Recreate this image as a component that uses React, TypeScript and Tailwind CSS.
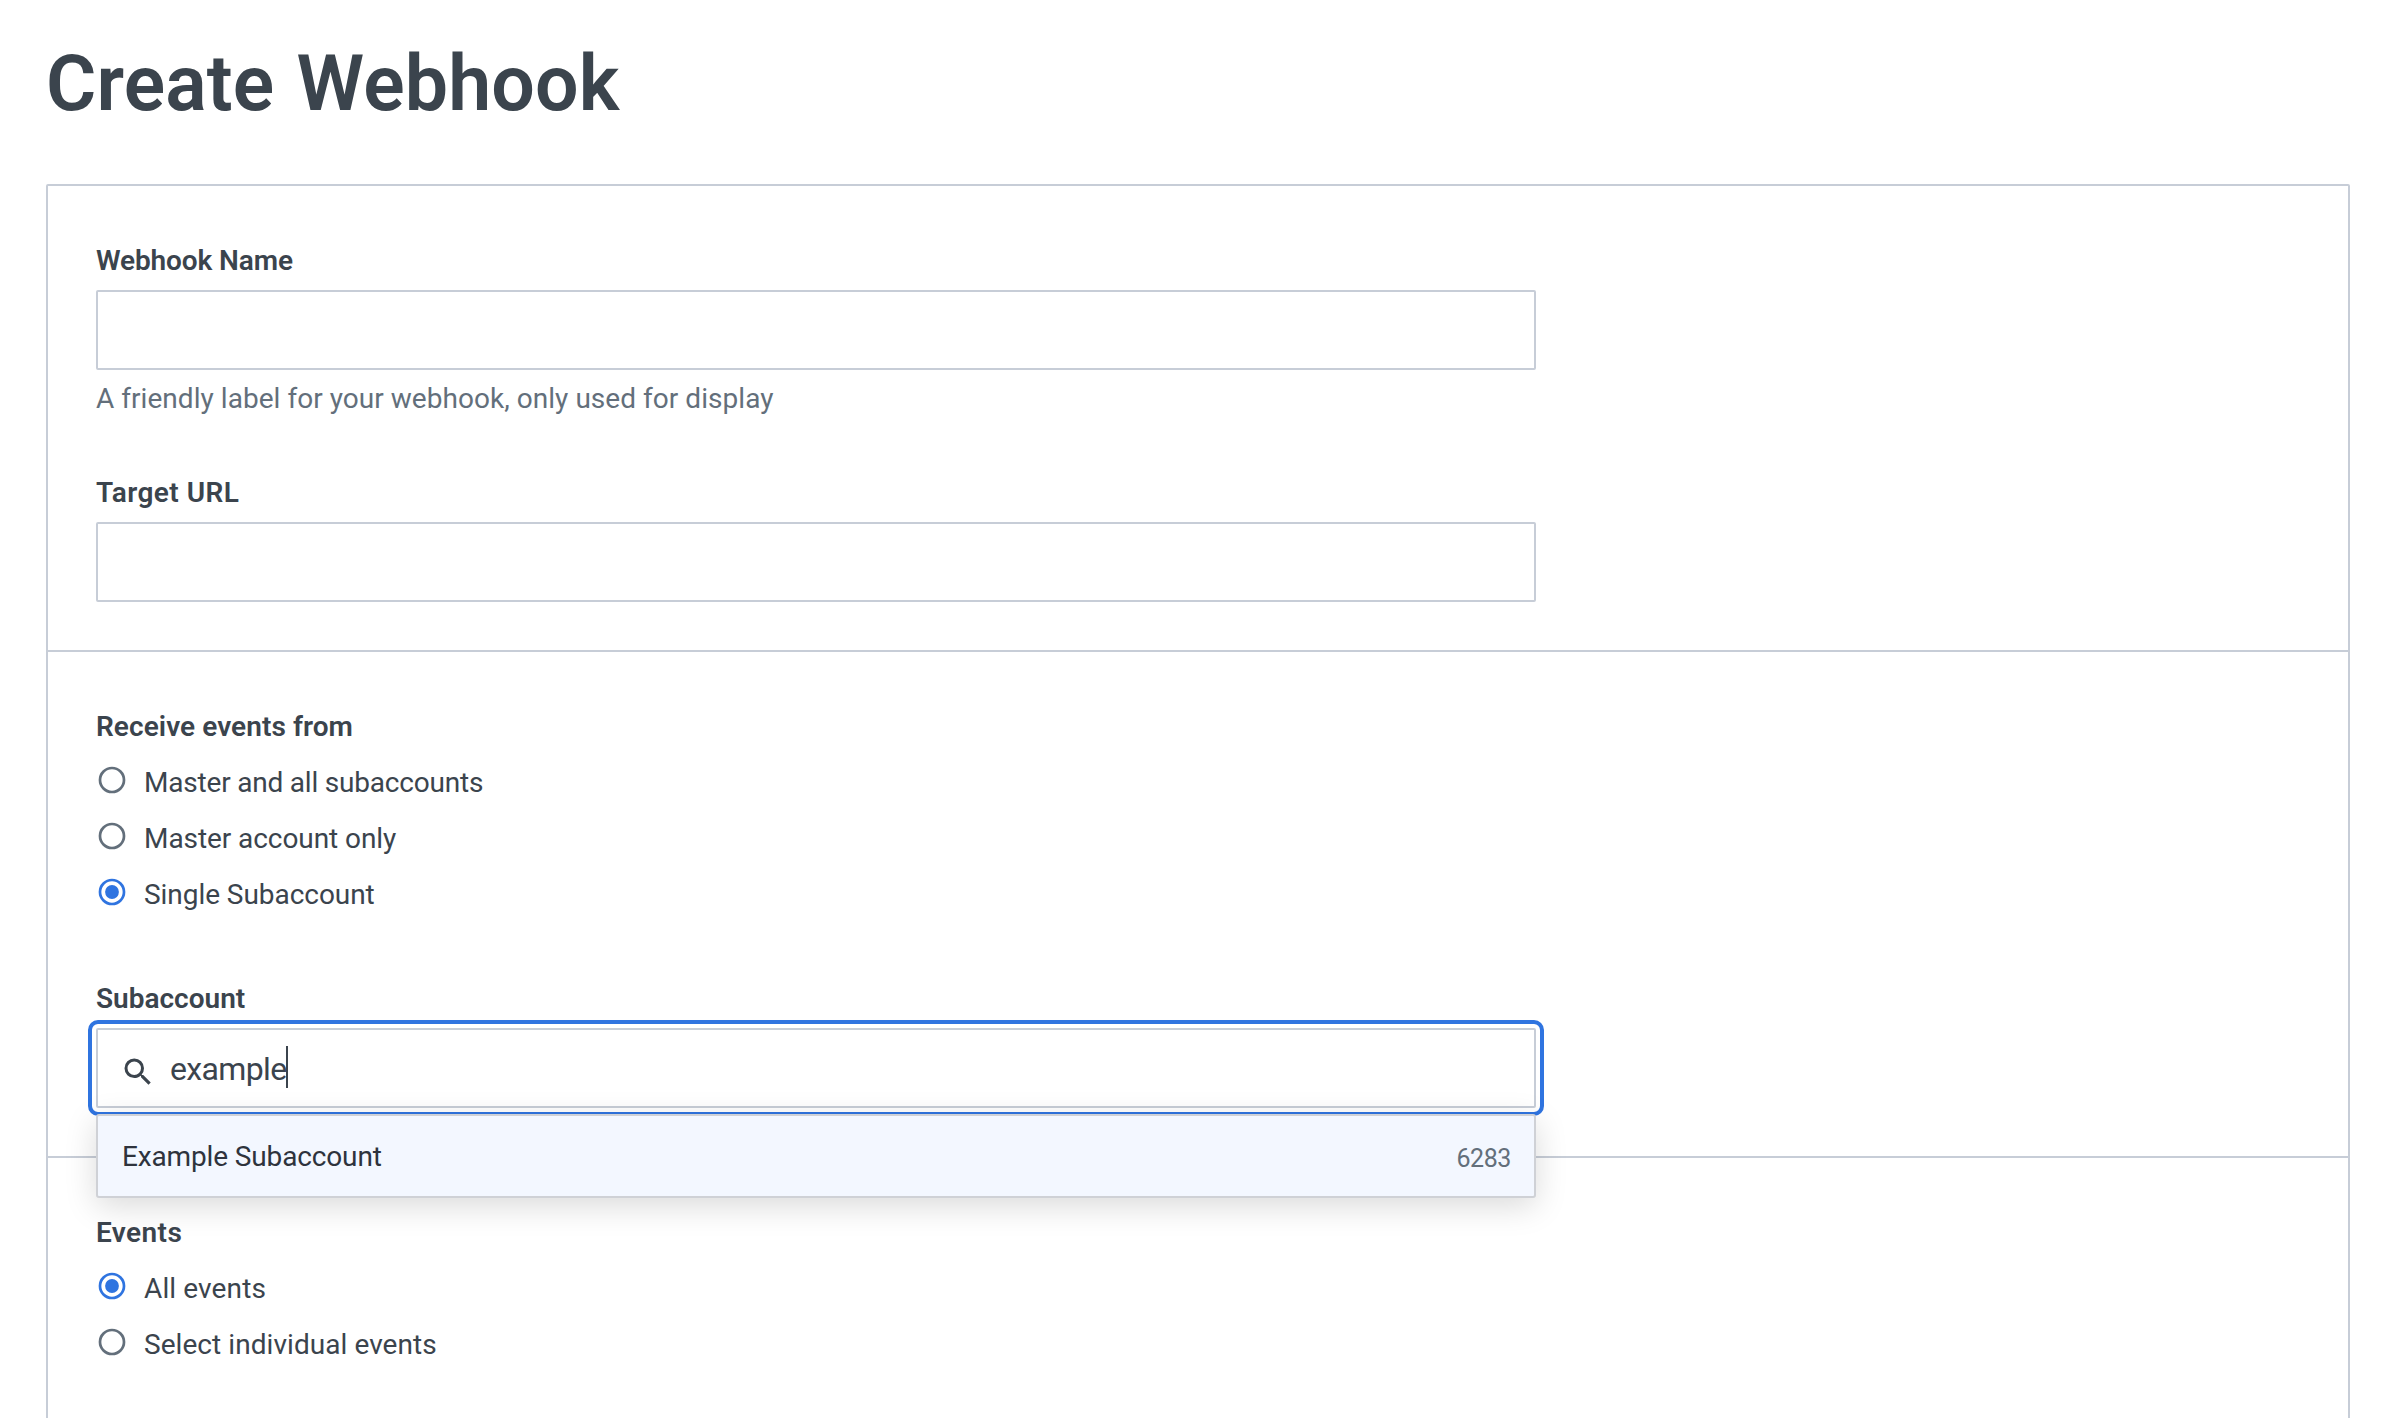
import type { ReactNode } from "react";

function Label({ children, className = "" }: { children: ReactNode; className?: string }) {
  return (
    <div className={`text-[28px] leading-[41px] font-semibold whitespace-nowrap ${className}`}>{children}</div>
  );
}

function Radio({ label, checked, tracking = "" }: { label: string; checked?: boolean; tracking?: string }) {
  return (
    <label className="flex items-start gap-[18px] pl-0.5">
      <svg
        viewBox="0 0 28 28"
        className={checked ? "mt-1 size-7 shrink-0 text-[#2f74e0]" : "mt-1 size-7 shrink-0 text-[#636f7b]"}
      >
        <circle cx="14" cy="14" r="12" fill="none" stroke="currentColor" strokeWidth="2.7" />
        {checked && <circle cx="14" cy="14" r="6.9" fill="currentColor" />}
      </svg>
      <span className={`text-[28px] leading-[41px] whitespace-nowrap ${tracking}`}>{label}</span>
    </label>
  );
}

function RadioGroup({ children }: { children: ReactNode }) {
  return <div className="mt-[15px] flex flex-col gap-[15px]">{children}</div>;
}

export default function App() {
  return (
    <div className="flex h-[1418px] w-[2394px] flex-col overflow-hidden bg-white pr-11 pl-[46px] pt-[39px] font-['Roboto',sans-serif] text-[#3b444d]">
      <h1 className="text-[77px] leading-[90px] font-semibold tracking-[0.15px] [word-spacing:3px]">Create Webhook</h1>

      <main className="mt-[55px] h-[1400px] shrink-0 rounded-[2px] border-2 border-[#c7cdd7]">
        <section className="border-b-2 border-[#c7cdd7] px-12 pt-[54px] pb-12">
          <Label className="tracking-[-0.12px]">Webhook Name</Label>
          <div className="mt-[9px] h-20 w-[1440px] rounded-[2px] border-2 border-[#c7cdd7]" />
          <p className="mt-2 text-[28px] leading-[41px] tracking-[0.04px] text-[#636f7b]">
            A friendly label for your webhook, only used for display
          </p>
          <Label className="mt-[53px] tracking-[0.45px]">Target URL</Label>
          <div className="mt-[9px] h-20 w-[1440px] rounded-[2px] border-2 border-[#c7cdd7]" />
        </section>

        <section className="border-b-2 border-[#c7cdd7] px-12 pt-[54px] pb-12">
          <Label className="tracking-[0.07px]">Receive events from</Label>
          <RadioGroup>
            <Radio label="Master and all subaccounts" tracking="tracking-[-0.2px]" />
            <Radio label="Master account only" tracking="tracking-[-0.07px]" />
            <Radio label="Single Subaccount" checked tracking="tracking-[-0.05px]" />
          </RadioGroup>

          <Label className="mt-[63px]">Subaccount</Label>
          <div className="relative mt-[9px] w-[1440px]">
            <div className="flex h-20 items-center rounded-[2px] border-2 border-[#c7cdd7] pl-[22px] outline-4 outline-offset-4 outline-[#2f74e0]">
              <svg viewBox="0 0 24 24" fill="currentColor" className="mt-2 size-9 shrink-0">
                <path d="M15.5 14h-.79l-.28-.27A6.47 6.47 0 0 0 16 9.5 6.5 6.5 0 1 0 9.5 16c1.61 0 3.09-.59 4.23-1.57l.27.28v.79l5 4.99L20.49 19l-4.99-5zm-6 0a4.5 4.5 0 1 1 0-9 4.5 4.5 0 0 1 0 9z" />
              </svg>
              <span className="mt-0.5 ml-[14px] text-[32px] leading-10 tracking-[-0.65px]">example</span>
              <span className="-mt-0.5 h-[42px] w-0.5 bg-[#3b444d]" />
            </div>
            <div className="absolute top-[86px] left-0 z-10 flex h-[84px] w-[1440px] justify-between rounded-[3px] border-2 border-[#cfd1d6] bg-[#f3f7ff] pt-5 pr-[23px] pl-6 shadow-[0_8px_32px_rgba(0,0,0,0.15)]">
              <span className="text-[28px] leading-[41px] tracking-[-0.14px] text-[#2e333d]">Example Subaccount</span>
              <span className="pt-0.5 text-[25px] leading-[41px] tracking-[-0.4px] text-[#636f7b]">6283</span>
            </div>
          </div>
        </section>

        <section className="px-12 pt-[54px]">
          <Label className="tracking-[0.4px]">Events</Label>
          <RadioGroup>
            <Radio label="All events" checked tracking="tracking-[0.12px]" />
            <Radio label="Select individual events" tracking="tracking-[0.06px]" />
          </RadioGroup>
        </section>
      </main>
    </div>
  );
}
